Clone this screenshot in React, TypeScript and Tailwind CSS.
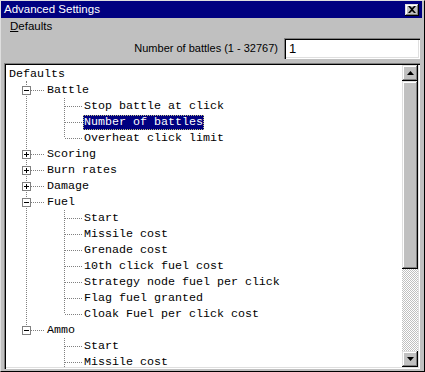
import React from "react";

type Row = {
  label: string;
  level: 0 | 1 | 2;
  exp?: "+" | "-";
  a?: "full" | "top" | "below";
  b?: "full" | "top";
  selected?: boolean;
};

const rows: Row[] = [
  { label: "Defaults", level: 0, a: "below" },
  { label: "Battle", level: 1, exp: "-", a: "full" },
  { label: "Stop battle at click", level: 2, a: "full", b: "full" },
  { label: "Number of battles", level: 2, a: "full", b: "full", selected: true },
  { label: "Overheat click limit", level: 2, a: "full", b: "top" },
  { label: "Scoring", level: 1, exp: "+", a: "full" },
  { label: "Burn rates", level: 1, exp: "+", a: "full" },
  { label: "Damage", level: 1, exp: "+", a: "full" },
  { label: "Fuel", level: 1, exp: "-", a: "full" },
  { label: "Start", level: 2, a: "full", b: "full" },
  { label: "Missile cost", level: 2, a: "full", b: "full" },
  { label: "Grenade cost", level: 2, a: "full", b: "full" },
  { label: "10th click fuel cost", level: 2, a: "full", b: "full" },
  { label: "Strategy node fuel per click", level: 2, a: "full", b: "full" },
  { label: "Flag fuel granted", level: 2, a: "full", b: "full" },
  { label: "Cloak Fuel per click cost", level: 2, a: "full", b: "top" },
  { label: "Ammo", level: 1, exp: "-", a: "top" },
  { label: "Start", level: 2, b: "full" },
  { label: "Missile cost", level: 2, b: "full" },
];

const vDots = "bg-[repeating-linear-gradient(to_bottom,#808080_0_1px,transparent_1px_2px)]";
const hDots = "bg-[repeating-linear-gradient(to_right,#808080_0_1px,transparent_1px_2px)]";
const raised =
  "bg-[#c0c0c0] shadow-[inset_-1px_-1px_#000,inset_1px_1px_#dfdfdf,inset_-2px_-2px_#808080,inset_2px_2px_#fff]";

function TreeRow({ row }: { row: Row }) {
  return (
    <div className="relative h-4 flex items-center shrink-0">
      {row.a === "full" && <span className={`absolute left-[20px] top-0 h-4 w-px ${vDots}`} />}
      {row.a === "top" && <span className={`absolute left-[20px] top-0 h-2 w-px ${vDots}`} />}
      {row.a === "below" && <span className={`absolute left-[20px] top-[15px] h-px w-px ${vDots}`} />}
      {row.b === "full" && <span className={`absolute left-[58px] top-0 h-4 w-px ${vDots}`} />}
      {row.b === "top" && <span className={`absolute left-[58px] top-0 h-2 w-px ${vDots}`} />}
      {row.level === 1 && <span className={`absolute left-[25px] top-2 h-px w-[14px] ${hDots}`} />}
      {row.level === 2 && <span className={`absolute left-[59px] top-2 h-px w-[18px] ${hDots}`} />}
      {row.exp && (
        <span className="absolute left-[16px] top-[4px] w-[9px] h-[9px] border border-[#808080] bg-white flex items-center justify-center">
          <span className="relative w-[5px] h-[5px] flex items-center justify-center">
            <span className="absolute w-[5px] h-px bg-black" />
            {row.exp === "+" && <span className="absolute w-px h-[5px] bg-black" />}
          </span>
        </span>
      )}
      <span
        className={
          (row.level === 0 ? "ml-[2px] " : row.level === 1 ? "ml-[40px] " : "ml-[77px] ") +
          (row.selected
            ? "bg-[#000080] text-white px-[1px] outline outline-1 outline-dotted outline-[#c0c080] -outline-offset-1 leading-[15px]"
            : "text-black px-[1px]") +
          " whitespace-pre"
        }
      >
        {row.label}
      </span>
    </div>
  );
}

function Arrow({ up }: { up?: boolean }) {
  return (
    <svg width="7" height="4" viewBox="0 0 7 4">
      {up ? <path d="M3.5 0 L7 4 L0 4 Z" fill="#000" /> : <path d="M0 0 L7 0 L3.5 4 Z" fill="#000" />}
    </svg>
  );
}

export default function App() {
  return (
    <div
      className="w-[425px] h-[372px] bg-[#c0c0c0] border-l border-t border-[#dfdfdf] border-r-black border-b-black border-r border-b flex flex-col overflow-hidden"
      style={{ fontFamily: '"Liberation Sans", Arial, sans-serif' }}
    >
      {/* title bar */}
      <div className="h-[17px] mr-[2px] bg-[#000080] flex items-center justify-between pl-[3px] pr-[3px] shrink-0">
        <span className="text-white text-[11.5px] leading-none">Advanced Settings</span>
        <div className={`w-[14px] h-[12px] ${raised} flex items-center justify-center`}>
          <svg width="8" height="7" viewBox="0 0 8 7">
            <path d="M0 0 H2 L4 2 L6 0 H8 L5 3.5 L8 7 H6 L4 5 L2 7 H0 L3 3.5 Z" fill="#000" />
          </svg>
        </div>
      </div>

      {/* menu */}
      <div className="h-[18px] flex items-center pl-[9px] shrink-0">
        <span className="text-[11.5px] text-black leading-none">
          <span className="underline">D</span>efaults
        </span>
      </div>

      {/* number field */}
      <div className="mt-[2px] h-[21px] flex items-center justify-end pr-[4px] gap-[6px] shrink-0">
        <span className="text-[11px] text-black">Number of battles (1 - 32767)</span>
        <div className="w-[136px] h-[21px] bg-white shadow-[inset_1px_1px_#808080,inset_2px_2px_#000,inset_-1px_-1px_#fff,inset_-2px_-2px_#dfdfdf] flex items-center pl-[5px]">
          <span className="text-[13px] text-black leading-none">1</span>
        </div>
      </div>

      {/* tree */}
      <div className="mt-[4px] ml-[3px] mr-[4px] h-[306px] p-[2px] bg-white shadow-[inset_1px_1px_#808080,inset_2px_2px_#000,inset_-1px_-1px_#fff,inset_-2px_-2px_#dfdfdf] flex shrink-0">
        <div
          className="flex-1 flex flex-col overflow-hidden pt-[1px] text-[11.67px] leading-4"
          style={{ fontFamily: '"Liberation Mono", "Courier New", monospace' }}
        >
          {rows.map((r, i) => (
            <TreeRow key={i} row={r} />
          ))}
        </div>
        <div className="w-[16px] flex flex-col shrink-0">
          <div className={`h-4 ${raised} flex items-center justify-center`}>
            <Arrow up />
          </div>
          <div className={`h-[188px] ${raised}`} />
          <div className="flex-1 bg-[repeating-conic-gradient(#c0c0c0_0_25%,#fff_0_50%)] bg-[length:2px_2px]" />
          <div className={`h-4 ${raised} flex items-center justify-center`}>
            <Arrow />
          </div>
        </div>
      </div>
    </div>
  );
}
